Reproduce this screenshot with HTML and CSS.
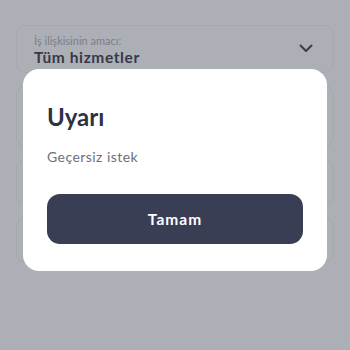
FILE: index.html
```html
<!DOCTYPE html>
<html lang="tr">
<head>
<meta charset="utf-8">
<link rel="stylesheet" href="styles.css">
</head>
<body>
<div class="form">
  <div class="field field-select">
    <div class="field-text">
      <div class="label">İş ilişkisinin amacı:</div>
      <div class="value">Tüm hizmetler</div>
    </div>
    <svg class="chevron" width="14" height="9" viewBox="0 0 14 9"><path d="M1.5 1.5 L7 7 L12.5 1.5" fill="none" stroke="#3a3d4b" stroke-width="2" stroke-linecap="round" stroke-linejoin="round"/></svg>
  </div>
  <div class="field field-tall"></div>
  <div class="field"></div>
  <div class="field"></div>
</div>
<div class="overlay">
  <div class="dialog">
    <h1 class="title">Uyarı</h1>
    <p class="message">Geçersiz istek</p>
    <button class="btn">Tamam</button>
  </div>
</div>
</body>
</html>
```
FILE: styles.css
```css
html, body {
  margin: 0;
  padding: 0;
}
body {
  width: 350px;
  height: 350px;
  background: #adafb6;
  font-family: Lato, "Noto Sans", sans-serif;
  position: relative;
  overflow: hidden;
}
.form {
  padding: 25px 16px 0 16px;
  display: flex;
  flex-direction: column;
  gap: 12px;
}
.field {
  height: 46px;
  border: 1px solid #a6a8b0;
  border-radius: 10px;
  box-sizing: border-box;
}
.field-select {
  height: 48px;
  display: flex;
  align-items: center;
  justify-content: space-between;
  padding: 0 20px 0 17px;
}
.field-tall {
  height: 62px;
}
.field-text {
  display: flex;
  flex-direction: column;
  padding-top: 4px;
}
.label {
  font-size: 11px;
  color: #7c7e89;
  line-height: 13px;
}
.value {
  font-size: 15.5px;
  font-weight: 700;
  color: #363948;
  line-height: 21px;
  letter-spacing: 0.6px;
}
.chevron {
  margin-top: -2px;
}
.overlay {
  position: absolute;
  left: 23px;
  top: 69px;
}
.dialog {
  width: 304px;
  height: 202px;
  box-sizing: border-box;
  background: #ffffff;
  border-radius: 16px;
  padding: 33px 24px 27px 24px;
  display: flex;
  flex-direction: column;
}
.title {
  margin: 0;
  font-size: 24px;
  font-weight: 700;
  color: #2d3144;
  line-height: 30px;
}
.message {
  margin: 16px 0 0 0;
  font-size: 14px;
  color: #6c6f7c;
  line-height: 18px;
  letter-spacing: 0.45px;
}
.btn {
  margin-top: auto;
  height: 50px;
  border: none;
  border-radius: 13px;
  background: #393e55;
  color: #ffffff;
  font-family: Lato, "Noto Sans", sans-serif;
  font-size: 15.5px;
  font-weight: 700;
  letter-spacing: 1px;
}
```
